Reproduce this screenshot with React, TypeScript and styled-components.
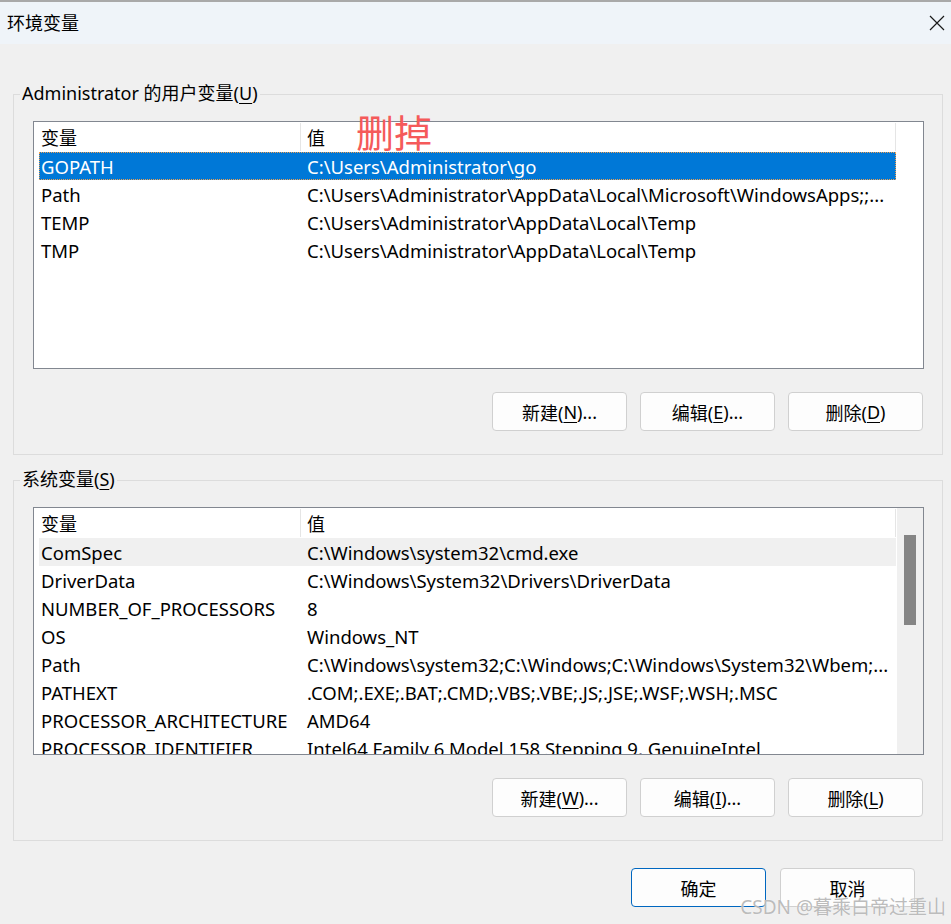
import React from 'react';
import styled, { createGlobalStyle } from 'styled-components';

// Global page reset
const GlobalStyle = createGlobalStyle`
  html, body {
    margin: 0;
    padding: 0;
    background: #f0f0f0;
  }
  body {
    font-family: "Noto Sans", "Noto Sans CJK SC", sans-serif;
  }
`;

type Row = { name: string; value: string; tone?: 'selected' | 'muted' };

const userRows: Row[] = [
  { name: 'GOPATH', value: 'C:\\Users\\Administrator\\go', tone: 'selected' },
  { name: 'Path', value: 'C:\\Users\\Administrator\\AppData\\Local\\Microsoft\\WindowsApps;;...' },
  { name: 'TEMP', value: 'C:\\Users\\Administrator\\AppData\\Local\\Temp' },
  { name: 'TMP', value: 'C:\\Users\\Administrator\\AppData\\Local\\Temp' },
];

const systemRows: Row[] = [
  { name: 'ComSpec', value: 'C:\\Windows\\system32\\cmd.exe', tone: 'muted' },
  { name: 'DriverData', value: 'C:\\Windows\\System32\\Drivers\\DriverData' },
  { name: 'NUMBER_OF_PROCESSORS', value: '8' },
  { name: 'OS', value: 'Windows_NT' },
  { name: 'Path', value: 'C:\\Windows\\system32;C:\\Windows;C:\\Windows\\System32\\Wbem;...' },
  { name: 'PATHEXT', value: '.COM;.EXE;.BAT;.CMD;.VBS;.VBE;.JS;.JSE;.WSF;.WSH;.MSC' },
  { name: 'PROCESSOR_ARCHITECTURE', value: 'AMD64' },
  { name: 'PROCESSOR_IDENTIFIER', value: 'Intel64 Family 6 Model 158 Stepping 9, GenuineIntel' },
];

// Window shell
const Window = styled.div`
  position: relative;
  width: 951px;
  height: 924px;
  background: #f0f0f0;
  color: #000;
  font-size: 18px;
  overflow: hidden;
  display: flex;
  flex-direction: column;
`;

const TitleBar = styled.div`
  height: 44px;
  box-sizing: border-box;
  border-top: 2px solid #a9a9a9;
  background: #eff4f9;
  display: flex;
  align-items: center;
  justify-content: space-between;
  padding: 0 6px 0 7px;
`;

const Title = styled.span`
  font-size: 18px;
  line-height: 24px;
`;

const CloseIcon = styled.svg`
  width: 16px;
  height: 16px;
  display: block;
`;

const Body = styled.div`
  padding: 50px 8px 0 13px;
  display: flex;
  flex-direction: column;
`;

// Group box
const Group = styled.section<{ $gap?: number }>`
  border: 1px solid #dcdcdc;
  padding: 0 18px 23px 19px;
  margin-top: ${(p) => p.$gap ?? 0}px;
  display: flex;
  flex-direction: column;
`;

const GroupLabel = styled.div`
  align-self: flex-start;
  margin: -14px 0 0 -13px;
  padding: 0 2px;
  background: #f0f0f0;
  line-height: 24px;
  font-size: 18px;
`;

// List view
const ListFrame = styled.div`
  margin-top: 16px;
  height: 248px;
  box-sizing: border-box;
  border: 1px solid #828790;
  background: #fff;
  display: flex;
  overflow: hidden;
`;

const ListColumns = styled.div`
  width: 862px;
  flex: none;
  display: flex;
  flex-direction: column;
  overflow: hidden;
`;

const HeaderRow = styled.div`
  height: 30px;
  flex: none;
  display: flex;
  align-items: stretch;
  font-size: 18px;
`;

const HeaderCell = styled.div<{ $first?: boolean }>`
  display: flex;
  align-items: center;
  box-sizing: border-box;
  padding-left: ${(p) => (p.$first ? 7 : 6)}px;
  width: ${(p) => (p.$first ? '267px' : 'auto')};
  flex: ${(p) => (p.$first ? 'none' : '1')};
  border-right: 1px solid #e5e5e5;
  margin: 1px 0;
`;

const DataRow = styled.div<{ $tone?: 'selected' | 'muted' }>`
  height: 28px;
  flex: none;
  margin-left: 5px;
  display: flex;
  align-items: center;
  white-space: nowrap;
  font-size: 18.5px;
  background: ${(p) =>
    p.$tone === 'selected' ? '#0078d7' : p.$tone === 'muted' ? '#f0f0f0' : 'transparent'};
  color: ${(p) => (p.$tone === 'selected' ? '#fff' : '#000')};
  outline: ${(p) => (p.$tone === 'selected' ? '1px dotted #f0a050' : 'none')};
  outline-offset: -1px;
`;

const NameCell = styled.div`
  width: 262px;
  flex: none;
  box-sizing: border-box;
  padding-left: 2px;
  overflow: hidden;
`;

const ValueCell = styled.div`
  flex: 1;
  padding-left: 6px;
  overflow: hidden;
`;

const ScrollTrack = styled.div<{ $active?: boolean }>`
  width: 27px;
  flex: none;
  background: ${(p) => (p.$active ? '#f0f0f0' : '#fff')};
  border-left: ${(p) => (p.$active ? '1px solid #fff' : 'none')};
  box-sizing: border-box;
`;

const ScrollThumb = styled.div`
  width: 12px;
  height: 90px;
  margin: 27px 0 0 7px;
  background: #858585;
`;

// Buttons
const ButtonRow = styled.div<{ $pad?: number; $gap?: number; $top?: number }>`
  display: flex;
  justify-content: flex-end;
  gap: ${(p) => p.$gap ?? 13}px;
  margin-top: ${(p) => p.$top ?? 23}px;
  padding-right: ${(p) => p.$pad ?? 1}px;
`;

const Button = styled.button<{ $primary?: boolean }>`
  width: 135px;
  height: 39px;
  box-sizing: border-box;
  border: 1px solid ${(p) => (p.$primary ? '#0067c0' : '#d0d0d0')};
  border-radius: 4px;
  background: #fdfdfd;
  font-family: "Noto Sans", "Noto Sans CJK SC", sans-serif;
  font-size: 18px;
  color: #000;
  padding: 0;
  display: flex;
  align-items: center;
  justify-content: center;

  u {
    text-underline-offset: 3px;
    text-decoration-thickness: 1px;
  }
`;

const Mnemonic = styled.u`
  text-underline-offset: 3px;
  text-decoration-thickness: 1px;
`;

// Overlays
const Annotation = styled.div`
  position: absolute;
  left: 356px;
  top: 112px;
  font-family: "Noto Sans CJK SC", sans-serif;
  font-size: 38px;
  line-height: 1;
  color: #f55a5a;
`;

const Watermark = styled.div`
  position: absolute;
  right: 5px;
  bottom: 6px;
  font-family: "Noto Sans", "Noto Sans CJK SC", sans-serif;
  font-size: 19px;
  line-height: 22px;
  color: rgba(170, 170, 170, 0.8);
  text-shadow: 0 0 1px #fff;
`;

const VariableList = ({ rows, scroll }: { rows: Row[]; scroll?: boolean }) => (
  <ListFrame>
    <ListColumns>
      <HeaderRow>
        <HeaderCell $first>变量</HeaderCell>
        <HeaderCell>值</HeaderCell>
      </HeaderRow>
      {rows.map((r) => (
        <DataRow key={r.name + r.value} $tone={r.tone}>
          <NameCell>{r.name}</NameCell>
          <ValueCell>{r.value}</ValueCell>
        </DataRow>
      ))}
    </ListColumns>
    <ScrollTrack $active={scroll}>{scroll && <ScrollThumb />}</ScrollTrack>
  </ListFrame>
);

const App = () => {
  return (
    <Window>
      <GlobalStyle />
      <TitleBar>
        <Title>环境变量</Title>
        <CloseIcon viewBox="0 0 16 16">
          <path d="M1 1 L15 15 M15 1 L1 15" stroke="#1a1a1a" strokeWidth="1.2" fill="none" />
        </CloseIcon>
      </TitleBar>
      <Body>
        <Group>
          <GroupLabel>
            Administrator 的用户变量(<Mnemonic>U</Mnemonic>)
          </GroupLabel>
          <VariableList rows={userRows} />
          <ButtonRow>
            <Button>
              新建(<u>N</u>)...
            </Button>
            <Button>
              编辑(<u>E</u>)...
            </Button>
            <Button>
              删除(<u>D</u>)
            </Button>
          </ButtonRow>
        </Group>
        <Group $gap={25}>
          <GroupLabel>
            系统变量(<Mnemonic>S</Mnemonic>)
          </GroupLabel>
          <VariableList rows={systemRows} scroll />
          <ButtonRow>
            <Button>
              新建(<u>W</u>)...
            </Button>
            <Button>
              编辑(<u>I</u>)...
            </Button>
            <Button>
              删除(<u>L</u>)
            </Button>
          </ButtonRow>
        </Group>
        <ButtonRow $top={27} $gap={14} $pad={28}>
          <Button $primary>确定</Button>
          <Button>取消</Button>
        </ButtonRow>
      </Body>
      <Annotation>删掉</Annotation>
      <Watermark>CSDN @暮乘白帝过重山</Watermark>
    </Window>
  );
};

export default App;
